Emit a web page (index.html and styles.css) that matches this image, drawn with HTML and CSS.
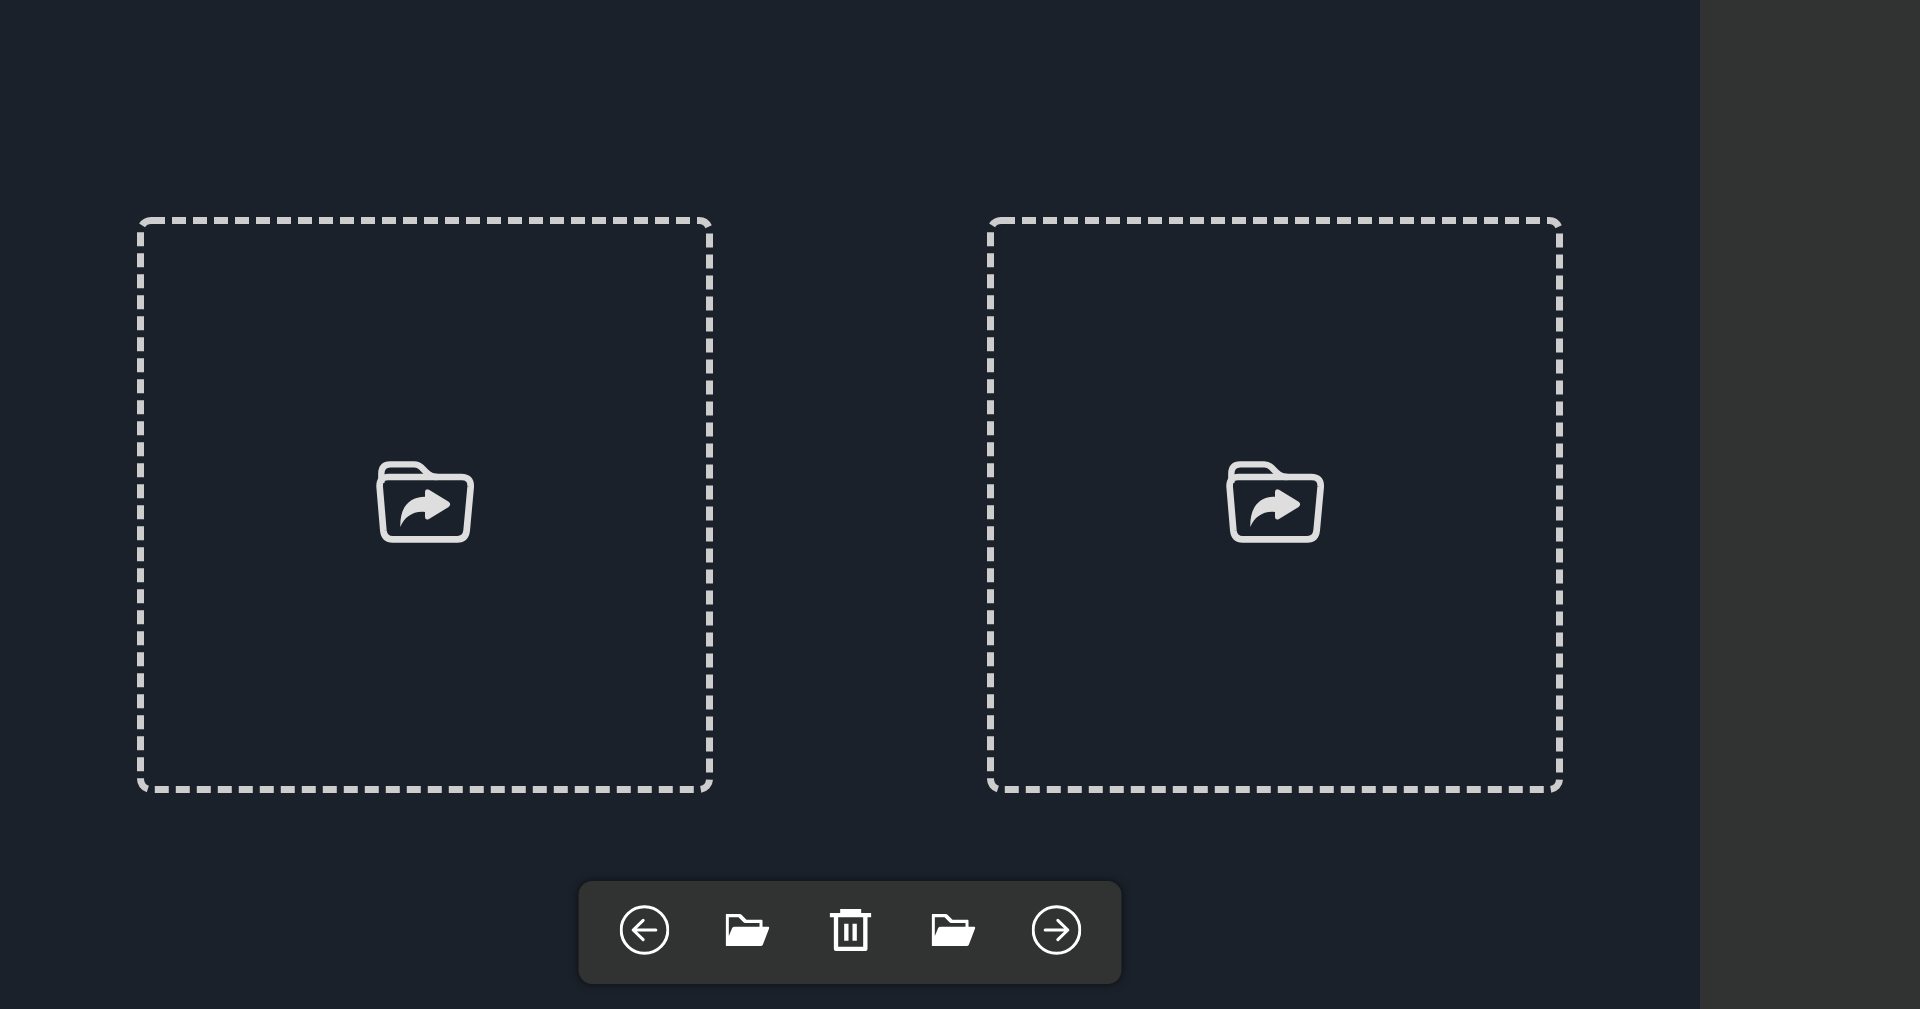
FILE: index.html
```html
<!DOCTYPE html>
<html lang="en">
<head>
<meta charset="utf-8">
<meta name="viewport" content="width=device-width, initial-scale=1">
<title>Image viewer</title>
<link rel="stylesheet" href="styles.css">
</head>
<body>
<svg class="sprite" aria-hidden="true">
  <symbol id="folder-share" viewBox="0 15 390 330">
    <path d="M64 114V86Q64 58 91 58H163Q175 58 184 67L198 81Q212 96 232 96" fill="none" stroke="currentColor" stroke-width="19"/>
    <path d="M86 96H304Q334 96 332 126L320 256Q317 283 292 283H98Q73 283 70 256L59 126Q57 96 86 96Z" fill="none" stroke="currentColor" stroke-width="20"/>
    <path d="M121 246C119 190 145 155 195 155V140Q196 129 207 134L266 170Q275 178 266 186L207 222Q196 227 195 216V201C160 197 133 216 121 246Z" fill="currentColor"/>
  </symbol>
  <symbol id="folder-open" viewBox="0 0 132 96">
    <path fill="currentColor" fill-rule="evenodd" d="M3 0H43Q46 0 48 2L63 17H108Q111 17 111 20V38H129Q133 38 131 43L112 92Q110 96 106 96H3Q0 96 0 93V3Q0 0 3 0ZM10 10V66L20 42Q22 38 27 38H102V27H59Q56 27 54 25L39 10Z"/>
  </symbol>
  <symbol id="trash" viewBox="0 0 126 126">
    <path fill="currentColor" fill-rule="evenodd" d="M32 0H95V12H126V25H114V120Q114 126 108 126H19Q13 126 13 120V25H0V12H32ZM26 25V113H101V25ZM44 44H57V95H44ZM69 44H82V95H69Z"/>
  </symbol>
  <symbol id="arrow-left" viewBox="0 0 150 150">
    <g fill="none" stroke="currentColor" stroke-width="9" stroke-linecap="round" stroke-linejoin="round">
      <circle cx="75" cy="75" r="70"/>
      <path d="M109 75H41M71 46L41 75L71 104"/>
    </g>
  </symbol>
  <symbol id="arrow-right" viewBox="0 0 150 150">
    <g fill="none" stroke="currentColor" stroke-width="9" stroke-linecap="round" stroke-linejoin="round">
      <circle cx="75" cy="75" r="70"/>
      <path d="M41 75H109M79 46L109 75L79 104"/>
    </g>
  </symbol>
</svg>
<div class="app">
  <main class="workspace">
    <section class="panel">
      <button class="dropzone" type="button" aria-label="Open left folder">
        <svg class="outline" aria-hidden="true"><rect class="dashes" x="3.5" y="3.5" rx="10.5"/></svg>
        <svg class="icon-share"><use href="#folder-share"/></svg>
      </button>
    </section>
    <section class="panel">
      <button class="dropzone" type="button" aria-label="Open right folder">
        <svg class="outline" aria-hidden="true"><rect class="dashes" x="3.5" y="3.5" rx="10.5"/></svg>
        <svg class="icon-share"><use href="#folder-share"/></svg>
      </button>
    </section>
    <nav class="toolbar" aria-label="Actions">
      <button class="tool" type="button" aria-label="Previous"><svg class="icon-arrow"><use href="#arrow-left"/></svg></button>
      <button class="tool" type="button" aria-label="Choose left folder"><svg class="icon-folder"><use href="#folder-open"/></svg></button>
      <button class="tool" type="button" aria-label="Delete"><svg class="icon-trash"><use href="#trash"/></svg></button>
      <button class="tool" type="button" aria-label="Choose right folder"><svg class="icon-folder"><use href="#folder-open"/></svg></button>
      <button class="tool" type="button" aria-label="Next"><svg class="icon-arrow"><use href="#arrow-right"/></svg></button>
    </nav>
  </main>
  <aside class="sidebar" aria-label="Details"></aside>
</div>
</body>
</html>
```
FILE: styles.css
```css
* {
  box-sizing: border-box;
}

body {
  margin: 0;
  background: #1b212b;
  font-family: "Liberation Sans", sans-serif;
}

button {
  padding: 0;
  background: none;
  border: 0;
  cursor: pointer;
}

.sprite {
  position: absolute;
  width: 0;
  height: 0;
}

.app {
  display: flex;
  min-height: 100vh;
}

.workspace {
  position: relative;
  display: flex;
  flex: 1;
}

.panel {
  display: flex;
  flex: 1;
  align-items: center;
  justify-content: center;
}

.dropzone {
  position: relative;
  display: flex;
  align-items: center;
  justify-content: center;
  width: 30vw;
  aspect-ratio: 1;
  color: #dedede;
  border-radius: 14px;
}

/* Dashed frame drawn over the drop area */
.outline {
  position: absolute;
  inset: 0;
  width: 100%;
  height: 100%;
}

.dashes {
  width: calc(100% - 7px);
  height: calc(100% - 7px);
  fill: none;
  stroke: #cdcdcd;
  stroke-width: 7px;
  stroke-dasharray: 14px 7px;
}

.icon-share {
  width: 130px;
  height: 110px;
}

/* Floats over the two panels */
.toolbar {
  position: absolute;
  bottom: 25px;
  left: 50%;
  display: flex;
  padding: 0 14px;
  background: #313332;
  border-radius: 14px;
  box-shadow: 0 0 8px rgba(0, 0, 0, 0.6);
  transform: translateX(-50%);
}

.tool {
  display: flex;
  align-items: center;
  justify-content: center;
  width: 103px;
  height: 103px;
  padding-bottom: 6px;
  color: #fff;
}

.icon-arrow {
  width: 50px;
  height: 50px;
}

.icon-folder {
  width: 44px;
  height: 32px;
}

.icon-trash {
  width: 42px;
  height: 42px;
}

.sidebar {
  width: 220px;
  background: #313332;
}
```
